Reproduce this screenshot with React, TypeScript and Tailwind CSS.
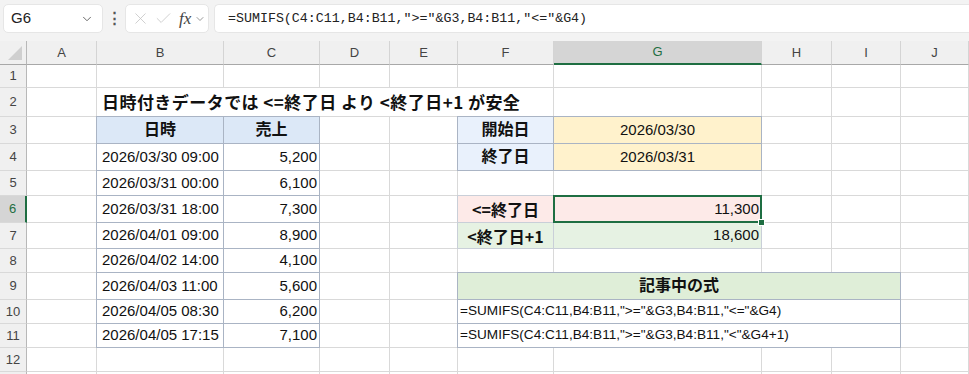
import { ChevronDown, X, Check } from "lucide-react";

const font = "font-['Liberation_Sans','Noto_Sans_CJK_JP',sans-serif]";
const grid = "border-r border-b border-[#d9d9d9]";
const tb = "-mt-px -ml-px border border-[#aab4c4]";
const lb = "-mt-px -ml-px border border-[#c9cfd8]";

function C({ children, className = "" }: { children?: React.ReactNode; className?: string }) {
  return (
    <div className={"flex items-center overflow-hidden whitespace-nowrap " + className}>
      {children}
    </div>
  );
}

function RowHead({ n, active }: { n?: number; active?: boolean }) {
  return (
    <C
      className={
        "justify-center border-b border-b-[#d9d9d9] text-[13px] " +
        (active
          ? "bg-[#d5d5d5] text-[#1e6e42] border-r-2 border-r-[#1e6e42]"
          : "bg-[#f0f0f0] text-[#444] border-r border-r-[#b8b8b8]")
      }
    >
      {n}
    </C>
  );
}

const rows: [string, string][] = [
  ["2026/03/30 09:00", "5,200"],
  ["2026/03/31 00:00", "6,100"],
  ["2026/03/31 18:00", "7,300"],
  ["2026/04/01 09:00", "8,900"],
  ["2026/04/02 14:00", "4,100"],
  ["2026/04/03 11:00", "5,600"],
  ["2026/04/05 08:30", "6,200"],
  ["2026/04/05 17:15", "7,100"],
];

function Empty({ n }: { n: number }) {
  return (
    <>
      {Array.from({ length: n }).map((_, i) => (
        <C key={i} className={grid} />
      ))}
    </>
  );
}

function DataCells({ i }: { i: number }) {
  return (
    <>
      <C className={tb + " pl-[5px] text-[15px] text-[#111]"}>{rows[i][0]}</C>
      <C className={tb + " justify-end pr-[2px] text-[15px] text-[#111]"}>{rows[i][1]}</C>
    </>
  );
}

export default function App() {
  const cols = ["A", "B", "C", "D", "E", "F", "G", "H", "I", "J"];
  return (
    <div className={"w-[969px] h-[374px] overflow-hidden bg-white " + font}>
      {/* formula bar */}
      <div className="h-[41px] bg-[#f3f3f3] flex items-start pt-[4px] pl-[3px]">
        <div className="w-[100px] h-[29px] bg-white rounded-[5px] border border-[#e6e6e6] flex items-center pl-[7px] pr-[8px] justify-between">
          <span className="text-[15px] text-[#222]">G6</span>
          <ChevronDown size={14} strokeWidth={1.5} className="text-[#555]" />
        </div>
        <div className="w-[22px] h-[29px] flex items-center justify-center text-[#555] text-[15px] font-bold">⋮</div>
        <div className="w-[84px] h-[29px] bg-white rounded-[5px] border border-[#e6e6e6] flex items-center pl-[5px] gap-[4px]">
          <X size={19} strokeWidth={1} className="text-[#c4c4c4]" />
          <Check size={19} strokeWidth={1} className="text-[#c4c4c4]" />
          <span className="font-['Liberation_Serif',serif] italic text-[17px] text-[#444] ml-[2px]">fx</span>
          <ChevronDown size={12} strokeWidth={1.5} className="text-[#777] -ml-[1px]" />
        </div>
        <div className="ml-[5px] flex-1 h-[29px] bg-white rounded-l-[5px] border border-r-0 border-[#e6e6e6] flex items-center pl-[13px]">
          <span className="font-['Liberation_Mono',monospace] text-[13.3px] text-[#222]">
            =SUMIFS(C4:C11,B4:B11,"&gt;="&amp;G3,B4:B11,"&lt;="&amp;G4)
          </span>
        </div>
      </div>

      {/* sheet */}
      <div className="grid grid-cols-[27px_70px_127px_96px_70px_68px_96px_208px_70px_69px_68px] grid-rows-[24px_23px_29px_27px_27px_25px_27px_26px_24px_27px_24px_24px_24px_24px]">
        {/* column headers */}
        <div className="bg-[#f0f0f0] border-r border-r-[#b8b8b8] border-b border-b-[#a8a8a8] flex items-end justify-end p-[4px]">
          <div className="w-0 h-0 border-l-[14px] border-l-transparent border-b-[14px] border-b-[#cfcfcf]" />
        </div>
        {cols.map((c) => (
          <C
            key={c}
            className={
              "justify-center text-[13px] border-r border-r-[#d4d4d4] " +
              (c === "G"
                ? "bg-[#d5d5d5] text-[#1e6e42] border-b-2 border-b-[#1e6e42]"
                : "bg-[#f0f0f0] text-[#444] border-b border-b-[#a8a8a8]")
            }
          >
            {c}
          </C>
        ))}

        {/* row 1 */}
        <RowHead n={1} />
        <Empty n={10} />

        {/* row 2 */}
        <RowHead n={2} />
        <Empty n={1} />
        <C className={"col-span-5 pl-[5px] font-['Noto_Sans_CJK_JP',sans-serif] text-[17px] tracking-[0.45px] font-bold text-[#111] " + grid}>
          日時付きデータでは &lt;=終了日 より &lt;終了日+1 が安全
        </C>
        <Empty n={4} />

        {/* row 3 */}
        <RowHead n={3} />
        <Empty n={1} />
        <C className={tb + " justify-center bg-[#dce8f7] text-[16px] font-bold text-[#111]"}>日時</C>
        <C className={tb + " justify-center bg-[#dce8f7] text-[16px] font-bold text-[#111]"}>売上</C>
        <Empty n={2} />
        <C className={tb + " justify-center bg-[#e9f1fc] text-[16px] font-bold text-[#111]"}>開始日</C>
        <C className={tb + " justify-center bg-[#fff2cc] text-[15px] text-[#111]"}>2026/03/30</C>
        <Empty n={3} />

        {/* row 4 */}
        <RowHead n={4} />
        <Empty n={1} />
        <DataCells i={0} />
        <Empty n={2} />
        <C className={tb + " justify-center bg-[#e9f1fc] text-[16px] font-bold text-[#111]"}>終了日</C>
        <C className={tb + " justify-center bg-[#fff2cc] text-[15px] text-[#111]"}>2026/03/31</C>
        <Empty n={3} />

        {/* row 5 */}
        <RowHead n={5} />
        <Empty n={1} />
        <DataCells i={1} />
        <Empty n={7} />

        {/* row 6 */}
        <RowHead n={6} active />
        <Empty n={1} />
        <DataCells i={2} />
        <Empty n={2} />
        <C className={lb + " justify-center bg-[#fdeae8] font-['Noto_Sans_CJK_JP',sans-serif] text-[16px] font-bold text-[#111]"}>&lt;=終了日</C>
        <C className={lb + " relative z-10 overflow-visible justify-end pr-[2px] bg-[#fdeae8] text-[15px] text-[#111]"}>
          11,300
          <div className="absolute -left-px -top-px -right-px -bottom-px border-2 border-[#1e6e42]" />
          <div className="absolute -right-[4px] -bottom-[4px] w-[7px] h-[7px] bg-[#1e6e42] border border-white" />
        </C>
        <Empty n={3} />

        {/* row 7 */}
        <RowHead n={7} />
        <Empty n={1} />
        <DataCells i={3} />
        <Empty n={2} />
        <C className={lb + " justify-center bg-[#e6f2e3] font-['Noto_Sans_CJK_JP',sans-serif] text-[16px] font-bold text-[#111]"}>&lt;終了日+1</C>
        <C className={lb + " justify-end pr-[2px] bg-[#e6f2e3] text-[15px] text-[#111]"}>18,600</C>
        <Empty n={3} />

        {/* row 8 */}
        <RowHead n={8} />
        <Empty n={1} />
        <DataCells i={4} />
        <Empty n={7} />

        {/* row 9 */}
        <RowHead n={9} />
        <Empty n={1} />
        <DataCells i={5} />
        <Empty n={2} />
        <C className={tb + " col-span-4 justify-center bg-[#dfeed8] text-[16px] font-bold text-[#111]"}>記事中の式</C>
        <Empty n={1} />

        {/* row 10 */}
        <RowHead n={10} />
        <Empty n={1} />
        <DataCells i={6} />
        <Empty n={2} />
        <C className={tb + " col-span-4 pl-[2px] text-[13.6px] text-[#111]"}>
          =SUMIFS(C4:C11,B4:B11,"&gt;="&amp;G3,B4:B11,"&lt;="&amp;G4)
        </C>
        <Empty n={1} />

        {/* row 11 */}
        <RowHead n={11} />
        <Empty n={1} />
        <DataCells i={7} />
        <Empty n={2} />
        <C className={tb + " col-span-4 pl-[2px] text-[13.6px] text-[#111]"}>
          =SUMIFS(C4:C11,B4:B11,"&gt;="&amp;G3,B4:B11,"&lt;"&amp;G4+1)
        </C>
        <Empty n={1} />

        {/* row 12 */}
        <RowHead n={12} />
        <Empty n={10} />

        {/* row 13 (only its top edge shows) */}
        <RowHead />
        <Empty n={10} />
      </div>
    </div>
  );
}
